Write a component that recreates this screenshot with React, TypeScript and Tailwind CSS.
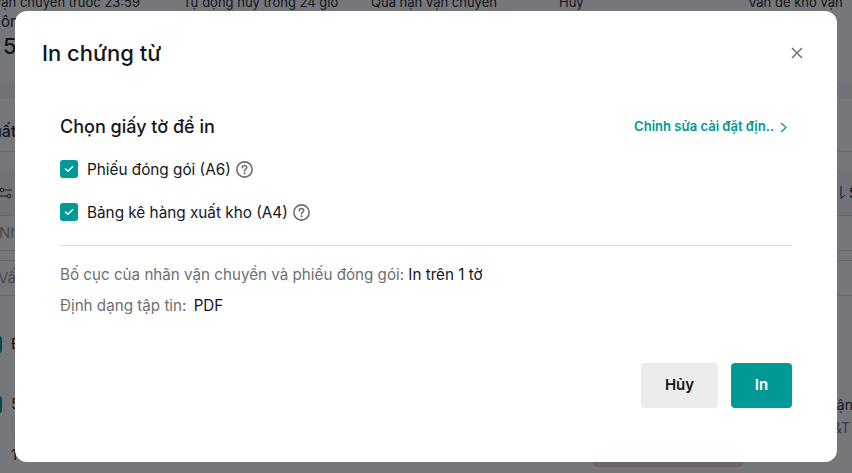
import React from 'react';

const font = { fontFamily: 'Inter, "Noto Sans", sans-serif' };

const HelpIcon = () => (
  <svg width="17" height="17" viewBox="0 0 16 16" fill="none" className="shrink-0">
    <circle cx="8" cy="8" r="7.2" stroke="#6d6f72" strokeWidth="1.5" />
    <path d="M5.9 6.3C5.9 5.1 6.8 4.3 8 4.3C9.2 4.3 10.1 5.1 10.1 6.2C10.1 7.6 8 7.7 8 9.3" stroke="#6d6f72" strokeWidth="1.5" strokeLinecap="round" />
    <circle cx="8" cy="11.6" r="1" fill="#6d6f72" />
  </svg>
);

const CheckBox = () => (
  <span className="w-[18px] h-[18px] rounded-[3px] bg-[#009995] flex items-center justify-center shrink-0">
    <svg width="10" height="8" viewBox="0 0 10 8" fill="none">
      <path d="M1.5 4L4 6.2L8.5 1.8" stroke="white" strokeWidth="1.6" strokeLinecap="round" strokeLinejoin="round" />
    </svg>
  </span>
);

const PrintOption = ({ label }: { label: string }) => (
  <div className="flex items-center h-[18px]">
    <CheckBox />
    <span className="ml-[9px] text-[15.3px] leading-[20px] pt-[1px] text-[#131619]">{label}</span>
    <span className="ml-[5px] pt-[1px]"><HelpIcon /></span>
  </div>
);

// what is left visible of the orders page around the dialog
const BackgroundPage = () => (
  <div className="w-full h-full flex flex-col bg-white text-[#26282c] text-[15px] whitespace-nowrap">
    <div className="grid grid-cols-[190px_188px_188px_189px_1fr] -ml-[7px] -mt-[8px] h-[20px] leading-[20px] shrink-0 text-[13px]">
      <span>Vận chuyển trước 23:59</span>
      <span>Tự động hủy trong 24 giờ</span>
      <span>Quá hạn vận chuyển</span>
      <span>Hủy</span>
      <span>Vấn đề kho vận</span>
    </div>
    <div className="h-[19px] leading-[19px] -ml-[18px] shrink-0">Không</div>
    <div className="h-[30px] leading-[30px] ml-[3px] text-[22px] font-medium shrink-0">5</div>
    <div className="h-[21px] shrink-0" />
    <div className="h-[17px] bg-[#f3f4f5] shrink-0" />
    <div className="h-[53px] border-b border-[#d8d8d8] pt-[22px] leading-[20px] font-medium text-[16px] shrink-0">
      <span className="-ml-[19px] block">Xuất c</span>
    </div>
    <div className="h-[18px] shrink-0" />
    <div className="h-[46px] bg-[#f3f4f5] border-b border-[#d8d8d8] flex items-center justify-between shrink-0">
      <svg width="13" height="12" viewBox="0 0 13 12" fill="none">
        <circle cx="2" cy="3" r="1.8" stroke="#26282c" strokeWidth="1" />
        <path d="M4 3H12M0 9H7" stroke="#26282c" strokeWidth="1" />
        <circle cx="9" cy="9" r="1.8" stroke="#26282c" strokeWidth="1" />
      </svg>
      <div className="flex items-center -mr-[6px]">
        <svg width="10" height="15" viewBox="0 0 10 15" fill="none">
          <path d="M3 1V13.5L7 10" stroke="#26282c" strokeWidth="1" />
        </svg>
        <span className="ml-[1px] text-[14px]">S</span>
      </div>
    </div>
    <div className="h-[34px] leading-[34px] -ml-[1px] text-[#9a9a9a] shrink-0">Nhà</div>
    <div className="h-[10px] border-t border-[#d8d8d8] shrink-0" />
    <div className="h-[36px] border-t border-b border-[#d8d8d8] leading-[34px] shrink-0 text-[#9a9a9a]">
      <span className="-ml-[2px]">Vấn</span>
    </div>
    <div className="h-[40px] shrink-0" />
    <div className="h-[17px] flex items-center shrink-0">
      <span className="w-[18px] h-[17px] -ml-[16px] rounded-[3px] bg-[#009995]" />
      <span className="ml-[9px]">Đ</span>
    </div>
    <div className="h-[43px] shrink-0" />
    <div className="h-[17px] flex items-center justify-between shrink-0">
      <div className="flex items-center">
        <span className="w-[18px] h-[17px] -ml-[16px] rounded-[3px] bg-[#009995]" />
        <span className="ml-[9px]">5</span>
      </div>
      <span className="-mr-[1px] text-[14px]">ận</span>
    </div>
    <div className="h-[3px] shrink-0" />
    <div className="h-[22px] flex items-center justify-between shrink-0">
      <span className="ml-[11px] w-[90px] h-[22px] rounded-[4px] bg-[#f3f4f5]" />
      <span className="mr-[2px] text-[14px] text-[#777]">&amp;T</span>
    </div>
    <div className="h-[20px] leading-[20px] mt-[7px] ml-[11px] shrink-0">1</div>
    <div className="h-[5px] w-[150px] ml-[593px] -mt-[3px] rounded-b-[4px] bg-[#f4d6dc] shrink-0" />
  </div>
);

export default function App() {
  return (
    <div className="relative w-[852px] h-[473px] overflow-hidden" style={font}>
      <BackgroundPage />
      <div className="absolute inset-0 bg-[#04080f]/55" />

      {/* dialog */}
      <div className="absolute left-[15px] top-[11px] w-[822px] h-[451px] bg-white rounded-[12px] flex flex-col">
        <div className="flex items-center justify-between pl-[27px] pr-[34px] pt-[27px]">
          <h1 className="text-[22px] leading-[30px] font-medium text-[#131619]">In chứng từ</h1>
          <svg width="12" height="12" viewBox="0 0 12 12" fill="none">
            <path d="M1 1L11 11M11 1L1 11" stroke="#6d6f72" strokeWidth="1.5" />
          </svg>
        </div>

        <div className="px-[45px] mt-[47px]">
          <div className="flex items-center justify-between">
            <h2 className="text-[18px] leading-[24px] font-medium text-[#131619]">Chọn giấy tờ để in</h2>
            <div className="flex items-center gap-[6px] pr-[5px] text-[#009995] text-[13px] font-semibold">
              <span>Chỉnh sửa cài đặt địn..</span>
              <svg width="7" height="11" viewBox="0 0 7 11" fill="none">
                <path d="M1 1L6 5.5L1 10" stroke="#009995" strokeWidth="1.3" />
              </svg>
            </div>
          </div>
          <div className="flex flex-col gap-[25px] mt-[21px]">
            <PrintOption label="Phiếu đóng gói (A6)" />
            <PrintOption label="Bảng kê hàng xuất kho (A4)" />
          </div>
          <div className="h-px bg-[#dcdcdc] mt-[24px]" />
          <div className="mt-[18px] text-[15.2px] leading-[22px] text-[#6d6f72]">
            Bố cục của nhãn vận chuyển và phiếu đóng gói: <span className="text-[#131619]">In trên 1 tờ</span>
          </div>
          <div className="mt-[9px] text-[15.2px] leading-[22px] text-[#6d6f72]">
            Định dạng tập tin: <span className="ml-[3px] text-[#131619]">PDF</span>
          </div>
        </div>

        <div className="mt-auto flex justify-end gap-[13px] pr-[45px] pb-[54px]">
          <button className="w-[77px] h-[45px] rounded-[4px] bg-[#ececec] text-[15px] font-semibold text-[#131619]">Hủy</button>
          <button className="w-[61px] h-[45px] rounded-[4px] bg-[#009995] text-[15px] font-semibold text-white">In</button>
        </div>
      </div>
    </div>
  );
}
